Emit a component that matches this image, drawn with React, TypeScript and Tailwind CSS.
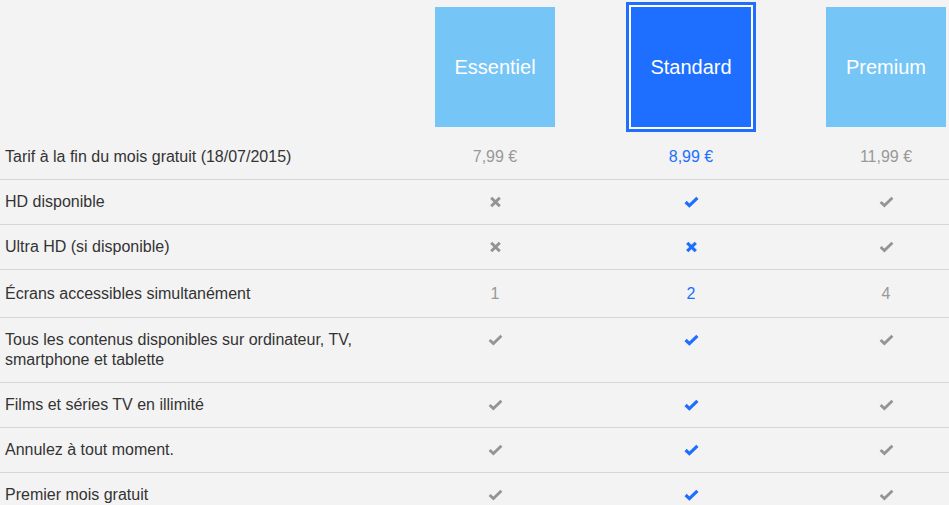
import React from "react";

type Cell = { kind: "text"; value: string } | { kind: "check" } | { kind: "cross" };

const GRAY = "#949494";
const BLUE = "#1e6fff";

function Check({ blue }: { blue: boolean }) {
  return (
    <svg width="15" height="12" viewBox="0 0 15 12" className="block">
      <path
        d="M1.6 6 L5.4 9.6 L13.4 1.8"
        fill="none"
        stroke={blue ? BLUE : GRAY}
        strokeWidth={blue ? 3.2 : 2.8}
        strokeLinecap="butt"
        strokeLinejoin="miter"
      />
    </svg>
  );
}

function Cross({ blue }: { blue: boolean }) {
  return (
    <svg width="13" height="12" viewBox="0 0 13 12" className="block">
      <path
        d="M2.2 1.8 L10.8 10.2 M10.8 1.8 L2.2 10.2"
        fill="none"
        stroke={blue ? BLUE : GRAY}
        strokeWidth={blue ? 3.2 : 3}
      />
    </svg>
  );
}

const rows: { label: React.ReactNode; cells: Cell[]; pad: string; border: boolean }[] = [
  {
    label: "Tarif à la fin du mois gratuit (18/07/2015)",
    cells: [
      { kind: "text", value: "7,99 €" },
      { kind: "text", value: "8,99 €" },
      { kind: "text", value: "11,99 €" },
    ],
    pad: "py-3",
    border: true,
  },
  {
    label: "HD disponible",
    cells: [{ kind: "cross" }, { kind: "check" }, { kind: "check" }],
    pad: "py-3",
    border: true,
  },
  {
    label: "Ultra HD (si disponible)",
    cells: [{ kind: "cross" }, { kind: "cross" }, { kind: "check" }],
    pad: "py-3",
    border: true,
  },
  {
    label: "Écrans accessibles simultanément",
    cells: [
      { kind: "text", value: "1" },
      { kind: "text", value: "2" },
      { kind: "text", value: "4" },
    ],
    pad: "pt-[14px] pb-[13px]",
    border: true,
  },
  {
    label: (
      <>
        Tous les contenus disponibles sur ordinateur, TV,
        <br />
        smartphone et tablette
      </>
    ),
    cells: [{ kind: "check" }, { kind: "check" }, { kind: "check" }],
    pad: "py-3",
    border: true,
  },
  {
    label: "Films et séries TV en illimité",
    cells: [{ kind: "check" }, { kind: "check" }, { kind: "check" }],
    pad: "py-3",
    border: true,
  },
  {
    label: "Annulez à tout moment.",
    cells: [{ kind: "check" }, { kind: "check" }, { kind: "check" }],
    pad: "py-3",
    border: true,
  },
  {
    label: "Premier mois gratuit",
    cells: [{ kind: "check" }, { kind: "check" }, { kind: "check" }],
    pad: "py-3",
    border: false,
  },
];

export default function App() {
  return (
    <div
      className="w-[949px] h-[505px] overflow-hidden bg-[#f3f3f3]"
      style={{ fontFamily: '"Liberation Sans", Arial, sans-serif' }}
    >
      <div className="w-[985px]">
        {/* Header */}
        <div className="grid grid-cols-[397px_196px_196px_194px] h-[135px]">
          <div />
          <div className="flex justify-center pt-[7px]">
            <div className="w-[120px] h-[120px] bg-[#76c5f7] flex items-center justify-center text-white text-[20px]">
              Essentiel
            </div>
          </div>
          <div className="flex justify-center pt-[2px]">
            <div className="w-[130px] h-[130px] border-[3px] border-[#1e6fff] p-[2px] bg-white">
              <div className="w-[120px] h-[120px] bg-[#1e6fff] flex items-center justify-center text-white text-[20px]">
                Standard
              </div>
            </div>
          </div>
          <div className="flex justify-center pt-[7px]">
            <div className="w-[120px] h-[120px] bg-[#76c5f7] flex items-center justify-center text-white text-[20px]">
              Premium
            </div>
          </div>
        </div>

        {/* Rows */}
        {rows.map((row, i) => (
          <div
            key={i}
            className={`grid grid-cols-[397px_196px_196px_194px] ${row.border ? "border-b border-[#d6d6d6]" : ""}`}
          >
            <div className={`pl-[5px] ${row.pad} text-[16px] leading-[20px] text-[#333333]`}>{row.label}</div>
            {row.cells.map((c, j) => {
              const blue = j === 1;
              return (
                <div
                  key={j}
                  className={`flex justify-center ${row.pad} ${i === 4 ? "items-start pt-[16px]" : "items-center"}`}
                >
                  {c.kind === "text" ? (
                    <span
                      className={`text-[16px] leading-[20px] ${blue ? "text-[#1e6fff]" : "text-[#999999]"}`}
                    >
                      {c.value}
                    </span>
                  ) : c.kind === "check" ? (
                    <Check blue={blue} />
                  ) : (
                    <Cross blue={blue} />
                  )}
                </div>
              );
            })}
          </div>
        ))}
      </div>
    </div>
  );
}
